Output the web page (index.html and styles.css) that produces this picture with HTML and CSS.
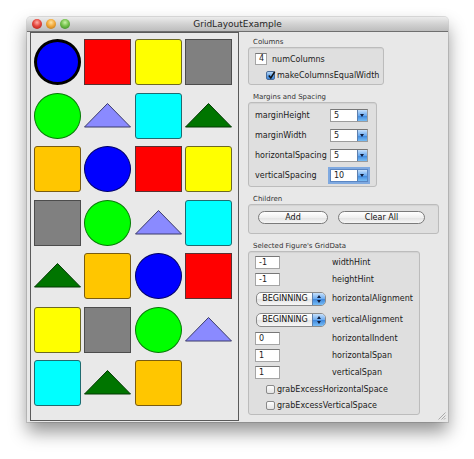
FILE: index.html
```html
<!DOCTYPE html>
<html>
<head>
<meta charset="utf-8">
<title>GridLayoutExample</title>
<link rel="stylesheet" href="styles.css">
</head>
<body>
<div class="window">
  <div class="titlebar">
    <div class="lights"><span class="light red"></span><span class="light yellow"></span><span class="light green"></span></div>
    <div class="title">GridLayoutExample</div>
    <div></div>
  </div>
  <div class="body">
    <div class="canvas">
      <div class="grid">
        <div class="cell"><div class="circle blue selected"></div></div>
        <div class="cell"><div class="sq red"></div></div>
        <div class="cell"><div class="sq yellow rnd"></div></div>
        <div class="cell"><div class="sq gray"></div></div>

        <div class="cell"><div class="circle green"></div></div>
        <div class="cell"><svg class="tri" viewBox="0 0 47 46"><polygon class="purple" points="0.5,34 23.5,10.5 46.5,34"/></svg></div>
        <div class="cell"><div class="sq cyan rnd"></div></div>
        <div class="cell"><svg class="tri" viewBox="0 0 47 46"><polygon class="dgreen" points="0.5,34 23.5,10.5 46.5,34"/></svg></div>

        <div class="cell"><div class="sq orange rnd"></div></div>
        <div class="cell"><div class="circle blue"></div></div>
        <div class="cell"><div class="sq red"></div></div>
        <div class="cell"><div class="sq yellow rnd"></div></div>

        <div class="cell"><div class="sq gray"></div></div>
        <div class="cell"><div class="circle green"></div></div>
        <div class="cell"><svg class="tri" viewBox="0 0 47 46"><polygon class="purple" points="0.5,34 23.5,10.5 46.5,34"/></svg></div>
        <div class="cell"><div class="sq cyan rnd"></div></div>

        <div class="cell"><svg class="tri" viewBox="0 0 47 46"><polygon class="dgreen" points="0.5,34 23.5,10.5 46.5,34"/></svg></div>
        <div class="cell"><div class="sq orange rnd"></div></div>
        <div class="cell"><div class="circle blue"></div></div>
        <div class="cell"><div class="sq red"></div></div>

        <div class="cell"><div class="sq yellow rnd"></div></div>
        <div class="cell"><div class="sq gray"></div></div>
        <div class="cell"><div class="circle green"></div></div>
        <div class="cell"><svg class="tri" viewBox="0 0 47 46"><polygon class="purple" points="0.5,34 23.5,10.5 46.5,34"/></svg></div>

        <div class="cell"><div class="sq cyan rnd"></div></div>
        <div class="cell"><svg class="tri" viewBox="0 0 47 46"><polygon class="dgreen" points="0.5,34 23.5,10.5 46.5,34"/></svg></div>
        <div class="cell"><div class="sq orange rnd"></div></div>
        <div class="cell"></div>
      </div>
    </div>

    <div class="side">
      <div class="glabel first">Columns</div>
      <div class="group g-columns">
        <div class="crow"><span class="field f-num">4</span><span class="lbl">numColumns</span></div>
        <div class="crow chkrow"><span class="check on"><svg viewBox="0 0 9 9"><path d="M1.8 4.6 L3.8 7 L7.8 0.6" fill="none" stroke="#111" stroke-width="1.5"/></svg></span><span class="lbl">makeColumnsEqualWidth</span></div>
      </div>

      <div class="glabel">Margins and Spacing</div>
      <div class="group g-margins">
        <div class="mrow"><span class="lbl">marginHeight</span><span class="combo"><span class="cval">5</span><span class="carrow"></span></span></div>
        <div class="mrow"><span class="lbl">marginWidth</span><span class="combo"><span class="cval">5</span><span class="carrow"></span></span></div>
        <div class="mrow"><span class="lbl">horizontalSpacing</span><span class="combo"><span class="cval">5</span><span class="carrow"></span></span></div>
        <div class="mrow"><span class="lbl">verticalSpacing</span><span class="combo focus"><span class="cval">10</span><span class="carrow"></span></span></div>
      </div>

      <div class="glabel">Children</div>
      <div class="group g-children">
        <span class="btn b-add">Add</span>
        <span class="btn b-clear">Clear All</span>
      </div>

      <div class="glabel">Selected Figure's GridData</div>
      <div class="group g-data">
        <div class="drow"><span class="field f-hint">-1</span><span class="lbl">widthHint</span></div>
        <div class="drow"><span class="field f-hint">-1</span><span class="lbl">heightHint</span></div>
        <div class="drow prow"><span class="popup"><span class="ptext">BEGINNING</span><span class="parrow"><i class="up"></i><i class="dn"></i></span></span><span class="lbl">horizontalAlignment</span></div>
        <div class="drow prow"><span class="popup"><span class="ptext">BEGINNING</span><span class="parrow"><i class="up"></i><i class="dn"></i></span></span><span class="lbl">verticalAlignment</span></div>
        <div class="drow"><span class="field f-hint">0</span><span class="lbl">horizontalIndent</span></div>
        <div class="drow"><span class="field f-hint">1</span><span class="lbl">horizontalSpan</span></div>
        <div class="drow"><span class="field f-hint">1</span><span class="lbl">verticalSpan</span></div>
        <div class="krow"><span class="check"></span><span class="lbl">grabExcessHorizontalSpace</span></div>
        <div class="krow"><span class="check"></span><span class="lbl">grabExcessVerticalSpace</span></div>
      </div>
    </div>
  </div>
  <svg class="grip" viewBox="0 0 9 9"><path d="M8.5 1.5 L1.5 8.5 M8.5 4.5 L4.5 8.5 M8.5 7 L7 8.5" stroke="#999" stroke-width="0.8" fill="none"/></svg>
</div>
</body>
</html>
```

FILE: styles.css
```css
* { box-sizing: border-box; margin: 0; padding: 0; }
html, body { background: #ffffff; }
body {
  font-family: "DejaVu Sans", Verdana, sans-serif;
  color: #1b1b1b;
  width: 474px;
  height: 459px;
  overflow: hidden;
}

.window {
  position: relative;
  margin: 17px 0 0 27px;
  width: 421px;
  height: 405px;
  background: #e8e8e8;
  border-radius: 4px 4px 0 0;
  box-shadow: 0 10px 18px rgba(0,0,0,0.42), 0 0 0 1px rgba(0,0,0,0.12);
  display: flex;
  flex-direction: column;
}

.titlebar {
  height: 15px;
  flex: none;
  display: grid;
  grid-template-columns: 1fr auto 1fr;
  align-items: center;
  background: linear-gradient(#ececec, #d2d2d2 50%, #bdbdbd);
  border-bottom: 1px solid #6f6f6f;
  border-radius: 4px 4px 0 0;
}
.lights { display: flex; gap: 4px; padding-left: 5px; }
.light { width: 10px; height: 10px; border-radius: 50%; }
.light.red { background: radial-gradient(circle at 50% 35%, #ffb0a8 0, #e5473d 45%, #a4150e 100%); }
.light.yellow { background: radial-gradient(circle at 50% 35%, #ffe2a0 0, #f2a93a 45%, #b06a0b 100%); }
.light.green { background: radial-gradient(circle at 50% 35%, #c9f2a7 0, #72c04b 45%, #2c7a1c 100%); }
.title { font-size: 9px; color: #262626; line-height: 14px; }

.body { flex: 1; display: flex; padding-left: 3px; }

.canvas {
  width: 209px;
  height: 389px;
  border: 1px solid #5a5a5a;
  background: #e9e9e9;
  padding: 6px 0 0 3px;
}
.grid {
  display: grid;
  grid-template-columns: repeat(4, 47px);
  grid-auto-rows: 46px;
  column-gap: 3.33px;
  row-gap: 7.5px;
}
.cell { width: 47px; height: 46px; }
.circle { width: 47px; height: 46px; border-radius: 50%; border: 1px solid; }
.sq { width: 47px; height: 46px; border: 1px solid #4a4a4a; }
.rnd { border-radius: 3px; }
.blue { background: #0000ff; border-color: #00006a; }
.blue.selected { border: 3px solid #000; }
.green { background: #00ff00; border-color: #067a06; }
.red { background: #ff0000; border-color: #5a3030; }
.yellow { background: #ffff00; border-color: #6e6a20; }
.gray { background: #808080; border-color: #4c4c4c; }
.cyan { background: #00ffff; border-color: #1f6b70; }
.orange { background: #ffc600; border-color: #7a5c10; }
.tri { width: 47px; height: 46px; display: block; }
.tri .purple { fill: #8a8aff; stroke: #3b3b6a; stroke-width: 1; }
.tri .dgreen { fill: #007500; stroke: #033a03; stroke-width: 1; }

.side { margin-left: 9px; padding-top: 5px; display: flex; flex-direction: column; align-items: flex-start; }
.glabel {
  font-size: 7px;
  color: #333;
  height: 10px;
  line-height: 10px;
  padding-left: 5px;
  margin-top: 7px;
}
.glabel.first { margin-top: 0; }
.group {
  border: 1px solid #bcbcbc;
  background: #dfdfdf;
  border-radius: 3px;
  box-shadow: inset 0 1px 1px rgba(0,0,0,0.06);
}
.lbl { font-size: 8px; color: #1b1b1b; white-space: nowrap; }

.field {
  display: inline-block;
  background: #fff;
  border: 1px solid #a5a5a5;
  border-top-color: #777;
  font-size: 8px;
  line-height: 11px;
  height: 13px;
  padding-left: 3px;
}

.g-columns { width: 136px; height: 38px; padding: 4px 0 0 6px; }
.crow { display: flex; align-items: center; height: 14px; }
.f-num { width: 12px; height: 12px; line-height: 10px; margin-right: 5px; }
.chkrow { margin-top: 2px; padding-left: 11px; }

.check {
  display: inline-block;
  width: 9px; height: 9px;
  border: 1px solid #8a8a8a;
  border-radius: 2px;
  background: linear-gradient(#fdfdfd, #e4e4e4);
  margin-right: 2px;
  position: relative;
}
.check.on { background: linear-gradient(#b9d9f8, #5d9fe6 55%, #3f86d8); border-color: #4a6c98; }
.check svg { position: absolute; left: 0; top: -1px; width: 9px; height: 9px; }

.g-margins { width: 129px; padding: 2px 0 1px 6px; }
.mrow { display: grid; grid-template-columns: 75px 38px; align-items: center; height: 20px; }
.combo {
  display: flex;
  height: 13px;
  background: #fff;
  border: 1px solid #9c9c9c;
  border-top-color: #777;
}
.combo.focus { box-shadow: 0 0 0 2px #7fa9e0; border-color: #5b86c2; }
.cval { flex: 1; font-size: 8px; line-height: 11px; padding-left: 3px; }
.carrow {
  width: 10px;
  background: linear-gradient(#c6e0fb, #6aaaf0 50%, #3d86dc 51%, #78bdf5);
  border-left: 1px solid #5d7fad;
  position: relative;
}
.carrow::after {
  content: "";
  position: absolute;
  left: 2px; top: 4px;
  border-left: 2.5px solid transparent;
  border-right: 2.5px solid transparent;
  border-top: 3px solid #0f1d3d;
}

.g-children { width: 191px; height: 30px; display: flex; gap: 10px; padding: 6px 0 0 9px; }
.btn {
  display: flex; align-items: center; justify-content: center;
  height: 13px;
  border: 1px solid #7a7a7a;
  border-radius: 7px;
  background: linear-gradient(#ffffff, #f0f0f0 50%, #e2e2e2 51%, #f6f6f6);
  font-size: 8px;
  color: #111;
}
.b-add { width: 70px; }
.b-clear { width: 87px; }

.g-data { width: 172px; height: 164px; padding: 2px 0 0 6px; }
.drow { display: grid; grid-template-columns: 77px auto; align-items: center; height: 17px; }
.prow { height: 21px; }
.f-hint { width: 25px; }
.popup {
  display: flex;
  width: 70px;
  height: 14px;
  margin-left: 1px;
  border: 1px solid #8a8a8a;
  border-radius: 5px;
  background: linear-gradient(#ffffff, #f1f1f1 50%, #e3e3e3 51%, #f7f7f7);
  overflow: hidden;
}
.ptext { flex: 1; font-size: 8px; line-height: 12px; text-align: center; color: #111; padding-left: 1px; }
.parrow {
  width: 13px;
  background: linear-gradient(#c6e0fb, #6aaaf0 50%, #3d86dc 51%, #78bdf5);
  border-left: 1px solid #5d7fad;
  position: relative;
}
.parrow i { position: absolute; left: 3.5px; width: 0; height: 0; border-left: 2.5px solid transparent; border-right: 2.5px solid transparent; }
.parrow .up { top: 2px; border-bottom: 3px solid #0f1d3d; }
.parrow .dn { top: 7px; border-top: 3px solid #0f1d3d; }
.krow { display: flex; align-items: center; height: 16px; padding-left: 11px; }
.krow .check { margin-right: 2px; }

.grip { position: absolute; right: 2px; bottom: 2px; width: 9px; height: 9px; }
```
